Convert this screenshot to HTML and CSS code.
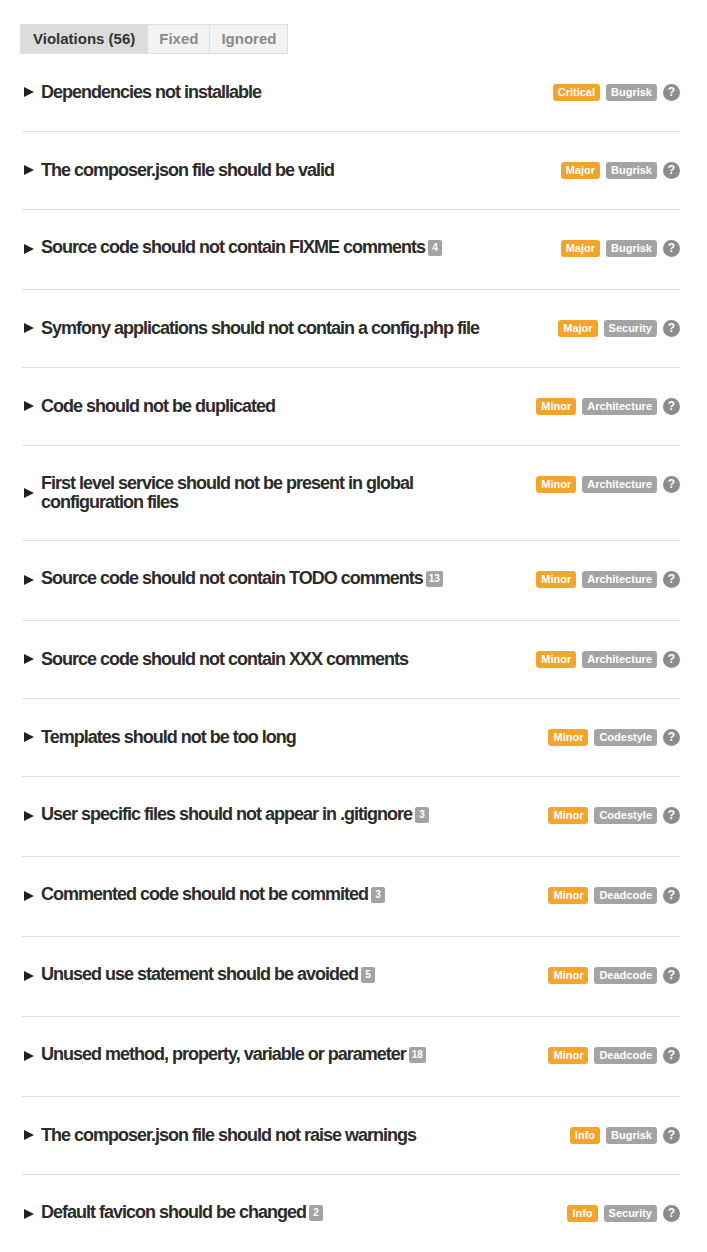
FILE: index.html
```html
<!DOCTYPE html>
<html>
<head>
<meta charset="utf-8">
<link rel="stylesheet" href="styles.css">
</head>
<body>
<div class="tabs">
  <span class="tab active">Violations (56)</span><span class="tab">Fixed</span><span class="tab">Ignored</span>
</div>
<ul class="violations">
  <li class="row"><div class="title"><span class="arrow"></span><span class="text">Dependencies not installable</span></div><div class="tags"><span class="badge sev">Critical</span><span class="badge cat">Bugrisk</span><span class="help">?</span></div></li>
  <li class="row"><div class="title"><span class="arrow"></span><span class="text">The composer.json file should be valid</span></div><div class="tags"><span class="badge sev">Major</span><span class="badge cat">Bugrisk</span><span class="help">?</span></div></li>
  <li class="row"><div class="title"><span class="arrow"></span><span class="text">Source code should not contain FIXME comments<span class="count">4</span></span></div><div class="tags"><span class="badge sev">Major</span><span class="badge cat">Bugrisk</span><span class="help">?</span></div></li>
  <li class="row"><div class="title"><span class="arrow"></span><span class="text">Symfony applications should not contain a config.php file</span></div><div class="tags"><span class="badge sev">Major</span><span class="badge cat">Security</span><span class="help">?</span></div></li>
  <li class="row"><div class="title"><span class="arrow"></span><span class="text">Code should not be duplicated</span></div><div class="tags"><span class="badge sev">Minor</span><span class="badge cat">Architecture</span><span class="help">?</span></div></li>
  <li class="row"><div class="title"><span class="arrow"></span><span class="text">First level service should not be present in global configuration files</span></div><div class="tags"><span class="badge sev">Minor</span><span class="badge cat">Architecture</span><span class="help">?</span></div></li>
  <li class="row"><div class="title"><span class="arrow"></span><span class="text">Source code should not contain TODO comments<span class="count">13</span></span></div><div class="tags"><span class="badge sev">Minor</span><span class="badge cat">Architecture</span><span class="help">?</span></div></li>
  <li class="row"><div class="title"><span class="arrow"></span><span class="text">Source code should not contain XXX comments</span></div><div class="tags"><span class="badge sev">Minor</span><span class="badge cat">Architecture</span><span class="help">?</span></div></li>
  <li class="row"><div class="title"><span class="arrow"></span><span class="text">Templates should not be too long</span></div><div class="tags"><span class="badge sev">Minor</span><span class="badge cat">Codestyle</span><span class="help">?</span></div></li>
  <li class="row"><div class="title"><span class="arrow"></span><span class="text">User specific files should not appear in .gitignore<span class="count">3</span></span></div><div class="tags"><span class="badge sev">Minor</span><span class="badge cat">Codestyle</span><span class="help">?</span></div></li>
  <li class="row"><div class="title"><span class="arrow"></span><span class="text">Commented code should not be commited<span class="count">3</span></span></div><div class="tags"><span class="badge sev">Minor</span><span class="badge cat">Deadcode</span><span class="help">?</span></div></li>
  <li class="row"><div class="title"><span class="arrow"></span><span class="text">Unused use statement should be avoided<span class="count">5</span></span></div><div class="tags"><span class="badge sev">Minor</span><span class="badge cat">Deadcode</span><span class="help">?</span></div></li>
  <li class="row"><div class="title"><span class="arrow"></span><span class="text">Unused method, property, variable or parameter<span class="count">18</span></span></div><div class="tags"><span class="badge sev">Minor</span><span class="badge cat">Deadcode</span><span class="help">?</span></div></li>
  <li class="row"><div class="title"><span class="arrow"></span><span class="text">The composer.json file should not raise warnings</span></div><div class="tags"><span class="badge sev">Info</span><span class="badge cat">Bugrisk</span><span class="help">?</span></div></li>
  <li class="row last"><div class="title"><span class="arrow"></span><span class="text">Default favicon should be changed<span class="count">2</span></span></div><div class="tags"><span class="badge sev">Info</span><span class="badge cat">Security</span><span class="help">?</span></div></li>
</ul>
</body>
</html>
```
FILE: styles.css
```css
body {
  margin: 8px;
  background: #fff;
  font-family: "Liberation Sans", Arial, sans-serif;
  color: #333;
}
.tabs {
  display: flex;
  margin: 16px 0 0 12px;
}
.tab {
  display: block;
  height: 28px;
  line-height: 28px;
  padding: 0 11px;
  font-size: 15px;
  font-weight: bold;
  color: #8a8a8a;
  background: #f3f3f3;
  border: 1px solid #e0e0e0;
  margin-right: -1px;
}
.tab.active {
  padding: 0 12px;
  color: #333;
  background: #dcdcdc;
}
.violations {
  list-style: none;
  margin: 0 0 0 14px;
  padding: 0;
  width: 658px;
}
.row {
  display: flex;
  align-items: flex-start;
  justify-content: space-between;
  gap: 20px;
  padding: 28px 0 29px 0;
  border-bottom: 1px solid #dedede;
}
.row.last {
  border-bottom: none;
}
.title {
  display: flex;
  align-items: center;
  flex: 1;
  min-height: 20px;
}
.arrow {
  width: 0;
  height: 0;
  border-left: 10px solid #222;
  border-top: 5px solid transparent;
  border-bottom: 5px solid transparent;
  margin: 0 7px 0 2px;
  flex: none;
}
.text {
  font-size: 18px;
  line-height: 18.5px;
  font-weight: bold;
  letter-spacing: -1px;
  color: #2b2b2b;
}
.count {
  display: inline-block;
  height: 16px;
  line-height: 16px;
  min-width: 8px;
  padding: 0 3px;
  margin: 0 0 4px 3px;
  border-radius: 2px;
  background: #a3a3a3;
  color: #fff;
  font-size: 10px;
  letter-spacing: 0;
  text-align: center;
  vertical-align: 2px;
}
.tags {
  display: flex;
  align-items: center;
  gap: 6px;
  height: 20px;
  flex: none;
}
.badge {
  display: block;
  height: 17px;
  line-height: 17px;
  padding: 0 5px;
  border-radius: 3px;
  color: #fff;
  font-size: 11px;
  font-weight: bold;
}
.badge.sev {
  background: #f3a52b;
}
.badge.cat {
  background: #a4a4a4;
}
.help {
  display: block;
  width: 17px;
  height: 17px;
  line-height: 17px;
  border-radius: 50%;
  background: #8c8c8c;
  color: #fff;
  font-size: 12px;
  font-weight: bold;
  text-align: center;
}
```
